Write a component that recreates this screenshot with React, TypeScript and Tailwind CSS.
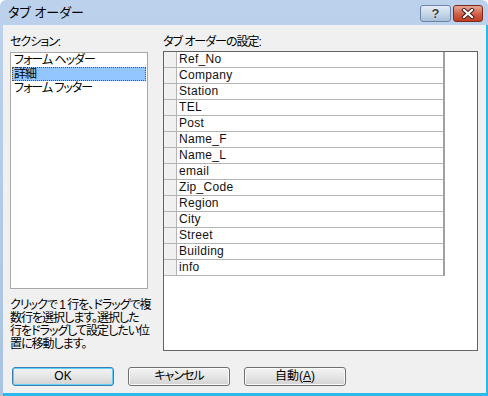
import React from 'react';

const fields = [
  'Ref_No',
  'Company',
  'Station',
  'TEL',
  'Post',
  'Name_F',
  'Name_L',
  'email',
  'Zip_Code',
  'Region',
  'City',
  'Street',
  'Building',
  'info',
];

const sections = ['フォーム ヘッダー', '詳細', 'フォーム フッター'];

const font = "font-['Liberation_Sans','Noto_Sans_CJK_JP',sans-serif] [font-feature-settings:'palt']";
// Japanese labels: the original font has narrow kana
const jp = 'tracking-[-1px]';

function DialogButton({ children, primary }: { children: React.ReactNode; primary?: boolean }) {
  return (
    <button
      className={
        'w-[102px] h-[19px] rounded-[3px] border text-[12px] leading-[17px] text-black bg-gradient-to-b from-[#f3f3f3] via-[#e6e6e6] to-[#d2d2d2] ' +
        (primary
          ? 'border-[#3c7fb1] shadow-[inset_0_0_0_1px_#5fd0f7]'
          : 'border-[#707070] shadow-[inset_0_0_0_1px_#fbfbfb]')
      }
    >
      {children}
    </button>
  );
}

export default function App() {
  return (
    <div className={`${font} w-[488px] h-[396px] flex flex-col bg-gradient-to-b from-[#bcd2ec] to-[#a9c3e2] rounded-t-[6px] overflow-hidden`}>
      {/* Title bar */}
      <div className="h-[25px] flex items-start justify-between pl-[8px] pr-[5px]">
        <span className="text-[13px] leading-[25px] text-black">タブ オーダー</span>
        <div className="flex gap-[2px] pt-[5px]">
          <div className="w-[31px] h-[17px] rounded-[3px] border border-[#6d84a4] bg-gradient-to-b from-[#e3ecf6] via-[#c8d8ea] to-[#a9bfda] flex items-center justify-center">
            <span className="text-[13px] leading-[15px] font-bold text-[#3a3a3a] [text-shadow:0_0_1px_#fff,0_0_1px_#fff]">?</span>
          </div>
          <div className="w-[30px] h-[17px] rounded-[3px] border border-[#7a2a1e] bg-gradient-to-b from-[#e8a796] via-[#d2634c] to-[#c23b22] flex items-center justify-center">
            <svg width="14" height="11" viewBox="0 0 14 11">
              <path d="M3 2 L11 9 M11 2 L3 9" stroke="#3d1a14" strokeWidth="4" strokeLinecap="square" />
              <path d="M3 2 L11 9 M11 2 L3 9" stroke="#ffffff" strokeWidth="2.2" strokeLinecap="square" />
            </svg>
          </div>
        </div>
      </div>

      {/* Client area */}
      <div className="flex-1 ml-[3px] bg-[#f0f0f0] border-r-2 border-b-[3px] border-[#2bb9ec] pl-[7px] pt-[8px]">
        <div className="flex gap-[15px] h-[318px]">
          {/* Sections */}
          <div className="w-[138px] flex flex-col">
            <div className={`h-[19px] text-[12px] leading-[19px] text-black ${jp}`}>セクション:</div>
            <div className="h-[240px] border border-[#a8a8a8] bg-white text-[12px] text-black">
              {sections.map((s, i) => (
                <div
                  key={s}
                  className={
                    `h-[14px] leading-[13px] mx-[1px] px-[1px] whitespace-nowrap ${jp} ` +
                    (i === 1 ? 'bg-[#93c6ff] border border-dotted border-[#6e4b23]' : 'border border-transparent')
                  }
                >
                  {s}
                </div>
              ))}
            </div>
            <div className={`mt-[10px] text-[12px] leading-[13px] text-black whitespace-nowrap ${jp}`}>
              クリックで 1 行を、ドラッグで複
              <br />
              数行を選択します。選択した
              <br />
              行をドラッグして設定したい位
              <br />
              置に移動します。
            </div>
          </div>

          {/* Tab order grid */}
          <div className="w-[315px] flex flex-col">
            <div className={`h-[18px] text-[12px] leading-[18px] text-black ${jp}`}>タブ オーダーの設定:</div>
            <div className="h-[300px] border border-[#646464] bg-white">
              <div className="w-[281px] border-r-2 border-[#a0a0a0]">
                {fields.map((f) => (
                  <div key={f} className="h-[16px] flex border-b border-[#b4b4b4]">
                    <div className="w-[13px] bg-[#f0f0f0] border-r border-[#b4b4b4]" />
                    <div className="flex-1 pl-[2px] text-[12px] leading-[15px] text-[#111] tracking-[0.3px]">{f}</div>
                  </div>
                ))}
              </div>
            </div>
          </div>
        </div>

        {/* Buttons */}
        <div className="flex gap-[14px] ml-[2px] mt-[16px]">
          <DialogButton primary>OK</DialogButton>
          <DialogButton>
            <span className={jp}>キャンセル</span>
          </DialogButton>
          <DialogButton>
            自動(<span className="underline">A</span>)
          </DialogButton>
        </div>
      </div>
    </div>
  );
}
